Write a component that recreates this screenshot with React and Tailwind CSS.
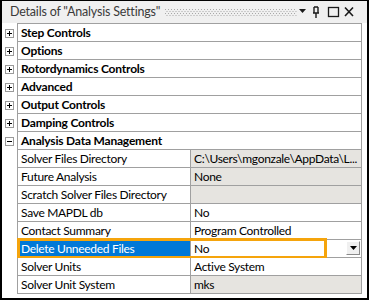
import React from "react";

const FONT = { fontFamily: 'Lato, "Noto Sans", sans-serif' };

const groups = [
  "Step Controls",
  "Options",
  "Rotordynamics Controls",
  "Advanced",
  "Output Controls",
  "Damping Controls",
];

const props = [
  { label: "Solver Files Directory", value: "C:\\Users\\mgonzale\\AppData\\L...", gray: true },
  { label: "Future Analysis", value: "None", gray: true },
  { label: "Scratch Solver Files Directory", value: "", gray: true },
  { label: "Save MAPDL db", value: "No" },
  { label: "Contact Summary", value: "Program Controlled" },
  { label: "Delete Unneeded Files", value: "No", selected: true },
  { label: "Solver Units", value: "Active System" },
  { label: "Solver Unit System", value: "mks", gray: true },
];

function Toggle({ open }) {
  return (
    <div className="w-[9px] h-[9px] border border-[#9a9a9a] bg-white relative">
      <div className="absolute left-[1px] top-[3px] w-[5px] h-[1px] bg-black" />
      {!open && <div className="absolute left-[3px] top-[1px] w-[1px] h-[5px] bg-black" />}
    </div>
  );
}

function GroupRow({ label, open, first }) {
  return (
    <div className="flex h-[18px]">
      <div className="w-[15px] flex items-center justify-center">
        <Toggle open={open} />
      </div>
      <div
        className={`w-[345px] border-x border-b border-[#a0a0a0] flex items-center pl-[3px] text-[12px] tracking-[-0.2px] font-bold text-black ${
          first ? "border-t h-[19px] -mt-[1px]" : ""
        }`}
      >
        {label}
      </div>
    </div>
  );
}

function PropRow({ label, value, gray, selected }) {
  return (
    <div className="flex h-[18px]">
      <div className="w-[15px]" />
      <div className="w-[345px] border-x border-b border-[#a0a0a0] flex text-[12px] tracking-[-0.3px] relative">
        <div
          className={`w-[173px] flex items-center pl-[3px] border-r border-[#a0a0a0] whitespace-nowrap ${
            selected ? "bg-[#0078d7] text-white" : "bg-white text-black"
          }`}
        >
          {label}
        </div>
        <div
          className={`flex-1 flex items-center pl-[3px] text-black whitespace-nowrap overflow-hidden ${
            gray ? "bg-[#e6e4e0]" : "bg-white"
          }`}
        >
          {value}
        </div>
        {selected && (
          <>
            <div className="absolute left-[-1px] top-[-2px] w-[310px] h-[21px] border-[3px] border-[#f5a40c]" />
            <div className="absolute right-[1px] top-[1px] w-[14px] h-[14px] bg-[#f0f0f0] border-r border-b border-[#8a8a8a] border-t border-l border-t-white border-l-white flex items-center justify-center">
              <svg width="7" height="4" viewBox="0 0 7 4">
                <path d="M0 0h7L3.5 4z" fill="#000" />
              </svg>
            </div>
          </>
        )}
      </div>
    </div>
  );
}

export default function App() {
  return (
    <div className="w-[371px] h-[303px] bg-white" style={FONT}>
      <div className="w-[369px] h-[300px] border-t border-x-2 border-b-2 border-black flex flex-col">
        <div className="h-[22px] bg-[#f0f0f0] flex items-center pl-[8px] pr-[12px]">
          <span className="text-[12.5px] tracking-[-0.2px] text-[#3a3a3a] whitespace-nowrap">Details of "Analysis Settings"</span>
          <svg className="ml-[5px] flex-1" height="8">
            <defs>
              <pattern id="grip" width="3" height="4" patternUnits="userSpaceOnUse">
                <rect x="0" y="1" width="1" height="1" fill="#a8a8a8" />
                <rect x="1.5" y="3" width="1" height="1" fill="#a8a8a8" />
              </pattern>
            </defs>
            <rect width="100%" height="8" fill="url(#grip)" />
          </svg>
          <svg className="ml-[2px]" width="56" height="12" viewBox="0 0 56 12">
            <path d="M0 3h7L3.5 7z" fill="#1a1a1a" />
            <path d="M15 1v6M19 1v6M15 1h4M14 7h6M17 7v5" stroke="#1a1a1a" strokeWidth="1.4" fill="none" />
            <rect x="29.5" y="1.5" width="10" height="9" stroke="#1a1a1a" strokeWidth="1.3" fill="none" />
            <path d="M46 1.5l8 8.5M54 1.5l-8 8.5" stroke="#1a1a1a" strokeWidth="1.6" />
          </svg>
        </div>
        <div className="pt-[1px]">
          {groups.map((g, i) => (
            <GroupRow key={g} label={g} first={i === 0} />
          ))}
          <GroupRow label="Analysis Data Management" open />
          {props.map((p) => (
            <PropRow key={p.label} {...p} />
          ))}
        </div>
      </div>
    </div>
  );
}
